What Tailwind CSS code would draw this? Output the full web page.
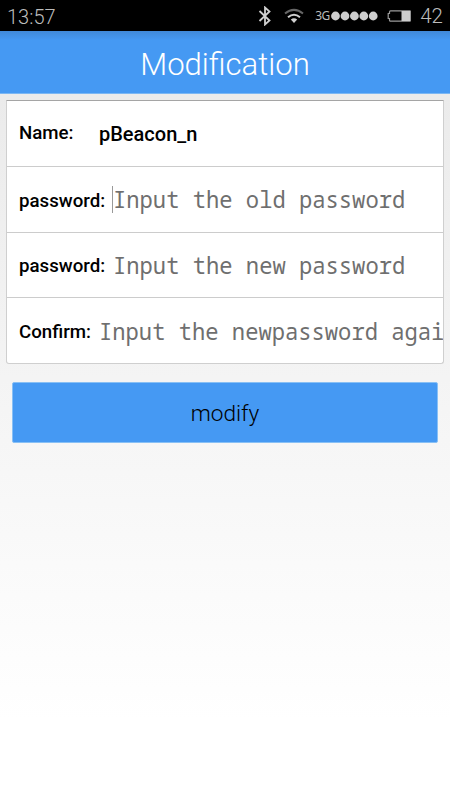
<!DOCTYPE html>
<html lang="en">
<head>
<meta charset="utf-8">
<title>Modification</title>
<script src="https://cdn.jsdelivr.net/npm/@tailwindcss/browser@4"></script>
</head>
<body class="flex h-[800px] w-[450px] flex-col overflow-hidden bg-linear-to-b from-[#ebebeb] from-12% to-white to-90% font-['Roboto',sans-serif] text-black">
<header class="flex h-[31px] shrink-0 items-center bg-black pl-[7px] pr-2 text-[#bcbcbc]">
  <span class="pt-[2px] text-[20px] font-light leading-none">13:57</span>
  <svg class="ml-auto mr-[12px] h-5 w-[14px]" viewBox="0 0 14 20" fill="none" stroke="#d0d0d0" stroke-width="1.8"><path d="M1.5 5 11.5 14.5 7 18.5V1.5l4.5 4L1.5 15"/></svg>
  <svg class="mr-[11px] h-4 w-5" viewBox="0 0 20 16" fill="none" stroke-width="2"><path d="M1 5.6Q10-1.8 19 5.6" stroke="#666"/><path d="M4 9.2Q10 4.2 16 9.2" stroke="#d0d0d0"/><path d="M6.8 11.6Q10 9 13.2 11.6L10 15Z" fill="#d0d0d0"/></svg>
  <span class="w-4 font-['Noto_Sans',sans-serif] text-[12px] leading-none tracking-[-0.5px]">3G</span>
  <svg class="mr-[9px] h-[10px] w-[47px]" viewBox="0 0 47 10" fill="#cecece"><circle cx="4.5" cy="5" r="4.4"/><circle cx="14" cy="5" r="4.4"/><circle cx="23.4" cy="5" r="4.4"/><circle cx="32.8" cy="5" r="4.4"/><circle cx="42.2" cy="5" r="4.4"/></svg>
  <svg class="mr-[9px] h-3 w-6" viewBox="0 0 24 12"><path d="M3.5 .8H23V11.2H3.5Q2.5 11.2 2.5 10V8.5H1.2V3.5H2.5V2Q2.5 .8 3.5 .8Z" fill="none" stroke="#9b9b9b" stroke-width="1.2"/><path d="M14.5 1H23.5v10h-9z" fill="#cecece"/></svg>
  <span class="-mr-px pt-[2px] text-[20.5px] font-light leading-none">42</span>
</header>
<div class="flex h-[63px] shrink-0 items-center justify-center border-b border-[#7bb7f3] bg-linear-to-b from-[#4189d8] to-[#4599f3] to-15% pt-[5px] text-white">
  <h1 class="text-[31.1px] font-light leading-none">Modification</h1>
</div>
<main class="px-[6px] pt-[6px]">
  <section class="flex h-[264px] flex-col overflow-hidden rounded-b-[3px] border border-[#cfcfcf] border-t-[#a5a5a5] bg-white text-[18.7px] font-medium">
    <div class="flex h-[66px] shrink-0 items-center border-b border-[#cccccc] pl-3">
      <span class="w-[80px] shrink-0">Name:</span><span class="text-[20px]">pBeacon_n</span>
    </div>
    <div class="flex h-[66px] shrink-0 items-center border-b border-[#cccccc] pl-3">
      <span class="w-[93px] shrink-0 pt-[3px]">password:</span><span class="h-[27px] w-px shrink-0 bg-[#999]"></span><span class="origin-center scale-y-105 whitespace-nowrap pt-px font-['Droid_Sans_Mono','Noto_Sans_Mono','DejaVu_Sans_Mono',monospace] text-[22.15px] font-[370] text-[#6f6f6f]">Input the old password</span>
    </div>
    <div class="flex h-[65px] shrink-0 items-center border-b border-[#cccccc] pl-3">
      <span class="w-[94px] shrink-0 pt-[2px]">password:</span><span class="origin-center scale-y-105 whitespace-nowrap pt-px font-['Droid_Sans_Mono','Noto_Sans_Mono','DejaVu_Sans_Mono',monospace] text-[22.15px] font-[370] text-[#6f6f6f]">Input the new password</span>
    </div>
    <div class="flex h-[66px] shrink-0 items-center pl-3">
      <span class="w-[80px] shrink-0 pt-[2px]">Confirm:</span><span class="origin-center scale-y-105 whitespace-nowrap pt-px font-['Droid_Sans_Mono','Noto_Sans_Mono','DejaVu_Sans_Mono',monospace] text-[22.15px] font-[370] text-[#6f6f6f]">Input the newpassword again</span>
    </div>
  </section>
  <button class="mx-[6px] mt-[18px] flex h-[61px] w-[426px] items-center justify-center rounded-[2px] border border-[#88c0f5] bg-[#4599f3] pt-[3px] text-[22.6px] font-light">modify</button>
</main>
</body>
</html>
